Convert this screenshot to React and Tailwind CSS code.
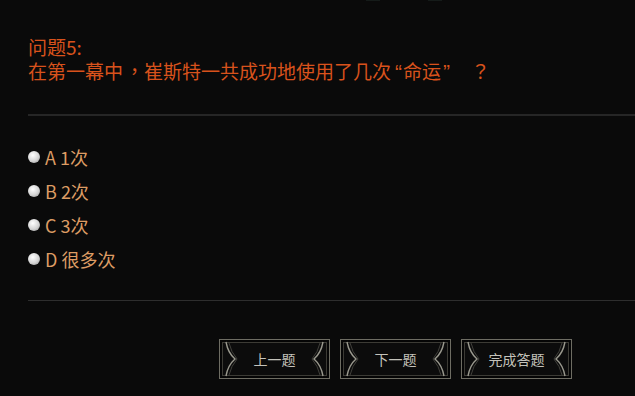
import React from "react";

const options = [
  { key: "A", text: "1次" },
  { key: "B", text: "2次" },
  { key: "C", text: "3次" },
  { key: "D", text: "很多次" },
];

const buttons = ["上一题", "下一题", "完成答题"];

function Ornament({ flip }) {
  return (
    <svg width="14" height="36" viewBox="0 0 14 36" className={flip ? "shrink-0 -scale-x-100" : "shrink-0"}>
      <path d="M2 1 Q4 12 11 18 Q4 24 2 35" fill="none" stroke="#9a998e" strokeWidth="1.4" />
      <path d="M5 2 Q7 11 13 18 Q7 25 5 34" fill="none" stroke="#4e4d46" strokeWidth="0.8" />
    </svg>
  );
}

function FrameButton({ label }) {
  return (
    <button className="w-[111px] h-[40px] border border-[#6e6d63] bg-[#050505] p-[2px]">
      <div className="h-full w-full border border-[#3c3b35] bg-[#0c0c0c] flex items-center justify-between px-[1px]">
        <Ornament />
        <span className="text-[14px] leading-none text-[#c4c3bb]">{label}</span>
        <Ornament flip />
      </div>
    </button>
  );
}

export default function App() {
  const tc = "font-['Noto_Sans_CJK_TC',sans-serif]";
  const latin = "font-['Liberation_Sans',sans-serif] text-[21px]";
  return (
    <div className="w-[635px] h-[396px] bg-[#0a0a0a] overflow-hidden font-['Noto_Sans_CJK_SC',sans-serif]">
      <div className="flex h-[2px] pl-[366px] gap-[48px]">
        <div className="w-[14px] h-[1px] bg-[#151b19]" />
        <div className="w-[14px] h-[1px] bg-[#151b19]" />
      </div>

      <div className="pl-[28px] pt-[33px]">
        <div className="text-[19px] leading-[24px] text-[#d8521c]">
          <div className="h-[24px]">问题5:</div>
          <div className="h-[24px] whitespace-nowrap overflow-visible">
            {"在第一幕中"}<span className={tc + " ml-[2px]"}>，</span>{"崔斯特一共成功地使用了几次"}<span className={latin + " ml-[4px] mr-[1px]"}>“</span>{"命运"}<span className={latin + " ml-[2px]"}>”</span><span className={tc + " ml-[21px]"}>？</span>
          </div>
        </div>

        <div className="mt-[31px] h-[2px] bg-[#262626]" />

        <div className="py-[24px]">
          {options.map((o) => (
            <div key={o.key} className="flex items-center h-[34px] gap-[5px]">
              <span className="w-[12px] h-[12px] rounded-full bg-[radial-gradient(circle_at_40%_35%,#ffffff,#d4d4d4_55%,#8c8c8c)]" />
              <span className="text-[18px] text-[#dd9c64]">
                {o.key} {o.text}
              </span>
            </div>
          ))}
        </div>

        <div className="h-[1px] bg-[#2e2e2e]" />

        <div className="mt-[38px] ml-[191px] flex gap-[10px]">
          {buttons.map((b) => (
            <FrameButton key={b} label={b} />
          ))}
        </div>
      </div>
    </div>
  );
}
